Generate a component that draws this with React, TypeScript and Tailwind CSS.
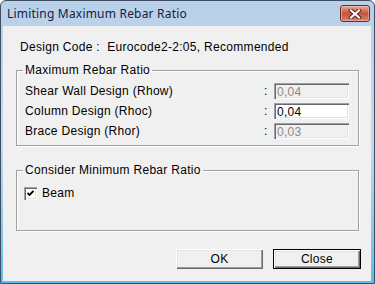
import React from "react";

const F = { fontFamily: '"Liberation Sans", Arial, sans-serif' };

function Row({ label, value, enabled }: { label: string; value: string; enabled?: boolean }) {
  return (
    <div className="flex items-center h-[20px]">
      <span className="flex-1 text-[12px] leading-[14px] text-black">{label}</span>
      <span className="w-[10px] text-[12px] leading-[14px] text-black">:</span>
      <div
        className={
          "w-[75px] h-[16px] pl-[3px] flex items-center text-[12px] leading-[14px] shadow-[inset_1px_1px_0_#a0a0a0,inset_2px_2px_0_#696969,inset_-1px_-1px_0_#ffffff,inset_-2px_-2px_0_#e3e3e3] " +
          (enabled ? "bg-white text-black" : "bg-[#f0f0f0] text-[#8a8a8a]")
        }
      >
        <span className="pt-[1px]">{value}</span>
      </div>
    </div>
  );
}

export default function App() {
  return (
    <div className="w-[375px] h-[284px] bg-white" style={F}>
      <div className="w-[375px] h-[284px] flex flex-col border border-[#3f4e60] rounded-t-[6px] bg-gradient-to-b from-[#b9d0ea] via-[#c4d8ef] to-[#58bdec] overflow-hidden">
        {/* title bar */}
        <div className="h-[25px] flex items-start justify-between pl-[6px] pr-[4px]">
          <span
            className="mt-[5px] text-[12px] leading-[16px] tracking-[0.2px] text-[#15223a]"
            style={{ fontFamily: '"Noto Sans", "Open Sans", sans-serif' }}
          >
            Limiting Maximum Rebar Ratio
          </span>
          <div className="mt-[4px] w-[30px] h-[17px] rounded-[3px] border border-[#6e2a22] bg-gradient-to-b from-[#e7a899] via-[#c8513e] to-[#d9826e] shadow-[inset_0_0_0_1px_rgba(255,220,210,0.45)] flex items-center justify-center">
            <svg width="14" height="10" viewBox="0 0 14 10">
              <path d="M3 1.5 L11 8.5 M11 1.5 L3 8.5" stroke="#5a1e16" strokeWidth="4" strokeLinecap="square" />
              <path d="M3 1.5 L11 8.5 M11 1.5 L3 8.5" stroke="#ffffff" strokeWidth="2.2" strokeLinecap="square" />
            </svg>
          </div>
        </div>
        {/* client area */}
        <div className="flex-1 ml-[2px] mr-[3px] mb-[2px] bg-[#f0f0f0] flex flex-col pl-[13px] pr-[12px] tracking-[0.3px]">
          <div className="mt-[14px] ml-[4px] text-[12px] leading-[14px] text-black whitespace-pre">
            {"Design Code :  Eurocode2-2:05, Recommended"}
          </div>
          <fieldset className="mt-[9px] border border-[#a0a0a0] pl-[8px] pr-[9px] pb-[4px] shadow-[inset_1px_1px_0_#ffffff,1px_1px_0_#ffffff]">
            <legend className="ml-[-2px] px-[2px] text-[12px] leading-[14px] text-black">Maximum Rebar Ratio</legend>
            <div className="mt-[4px] flex flex-col">
              <Row label="Shear Wall Design (Rhow)" value="0,04" />
              <Row label="Column Design (Rhoc)" value="0,04" enabled />
              <Row label="Brace Design (Rhor)" value="0,03" />
            </div>
          </fieldset>
          <fieldset className="mt-[17px] h-[68px] border border-[#a0a0a0] pl-[7px] shadow-[inset_1px_1px_0_#ffffff,1px_1px_0_#ffffff]">
            <legend className="ml-[-1px] px-[2px] text-[12px] leading-[14px] text-black">Consider Minimum Rebar Ratio</legend>
            <div className="mt-[9px] flex items-center">
              <div className="w-[13px] h-[13px] bg-white flex items-center justify-center shadow-[inset_1px_1px_0_#a0a0a0,inset_2px_2px_0_#696969,inset_-1px_-1px_0_#ffffff,inset_-2px_-2px_0_#e3e3e3]">
                <svg width="7" height="7" viewBox="0 0 7 7">
                  <path d="M0.5 3 L2.5 5 L6.5 1" stroke="#000" strokeWidth="1.8" fill="none" />
                </svg>
              </div>
              <span className="ml-[5px] text-[12px] leading-[14px] text-black">Beam</span>
            </div>
          </fieldset>
          <div className="mt-[18px] flex justify-end gap-[10px]">
            <button className="w-[87px] h-[20px] bg-[#f0f0f0] text-[12px] leading-[14px] tracking-[0.3px] text-black shadow-[inset_1px_1px_0_#ffffff,inset_-1px_-1px_0_#696969,inset_-2px_-2px_0_#a0a0a0,inset_2px_2px_0_#e3e3e3]">
              OK
            </button>
            <button className="w-[88px] h-[20px] mr-[-2px] border border-black bg-[#f0f0f0] text-[12px] leading-[14px] tracking-[0.3px] text-black shadow-[inset_1px_1px_0_#ffffff,inset_-1px_-1px_0_#696969,inset_-2px_-2px_0_#a0a0a0,inset_2px_2px_0_#e3e3e3]">
              Close
            </button>
          </div>
        </div>
      </div>
    </div>
  );
}
